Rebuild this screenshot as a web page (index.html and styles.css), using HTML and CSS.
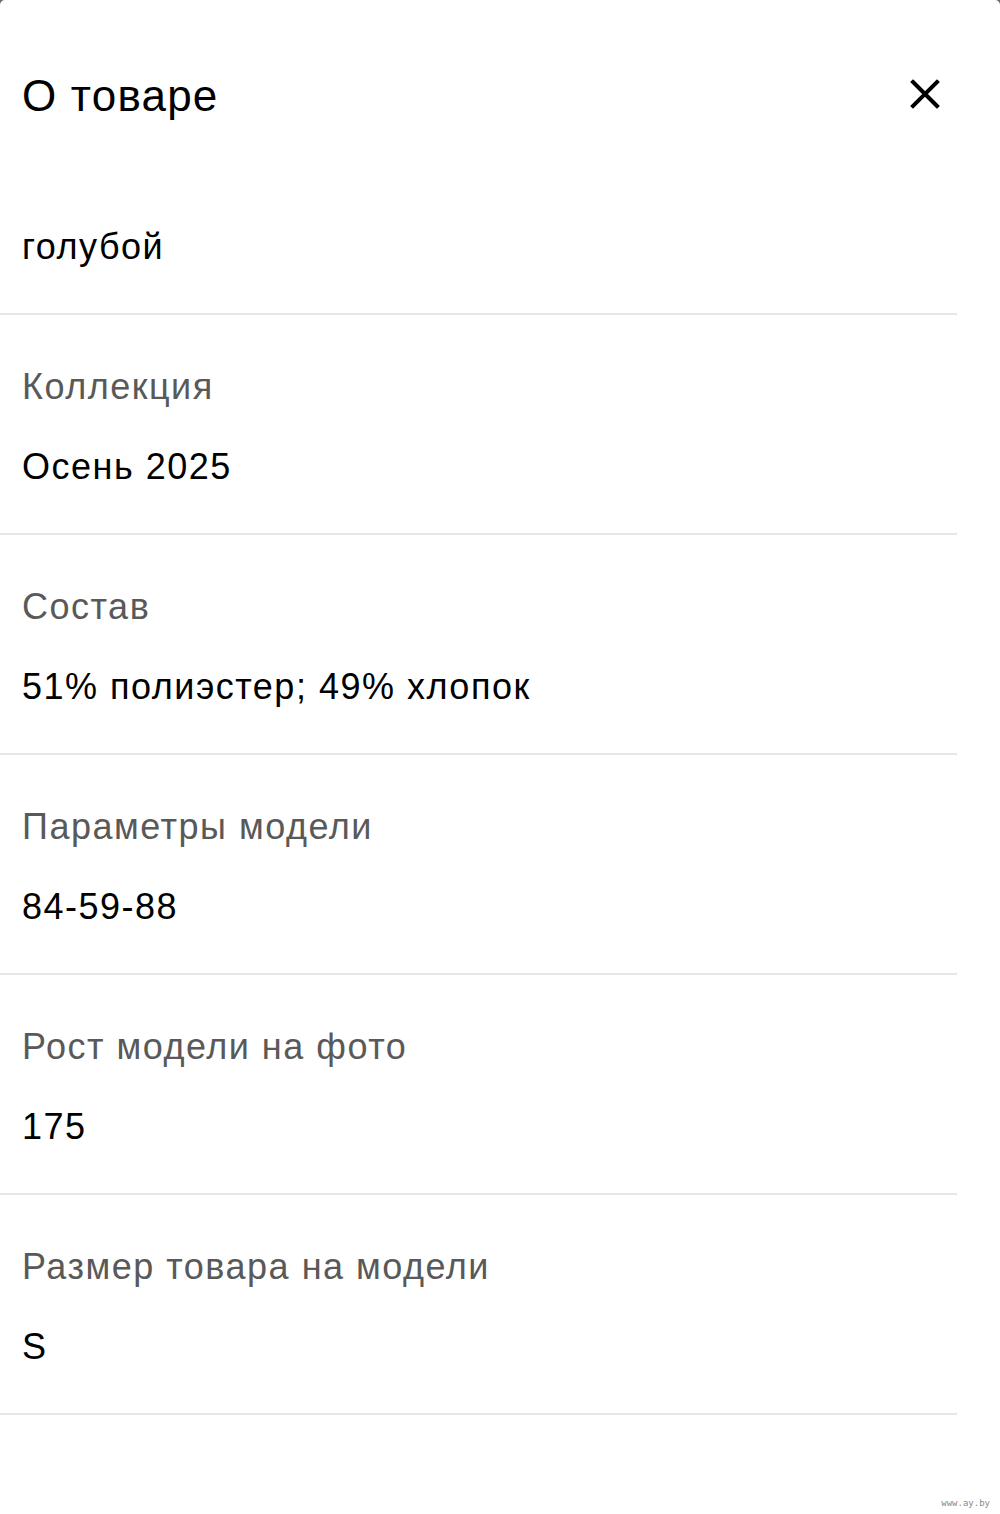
FILE: index.html
```html
<!DOCTYPE html>
<html lang="ru">
<head>
<meta charset="utf-8">
<title>О товаре</title>
<link rel="stylesheet" href="styles.css">
</head>
<body>
<div class="sheet">
  <header class="sheet-header">
    <h1 class="sheet-title">О товаре</h1>
    <button class="close-btn" aria-label="Закрыть">
      <svg width="30" height="30" viewBox="0 0 30 30" aria-hidden="true">
        <path d="M3 3 L27 27 M27 3 L3 27" stroke="#000" stroke-width="4" stroke-linecap="square" fill="none"/>
      </svg>
    </button>
  </header>
  <ul class="props">
    <li class="prop prop-first">
      <div class="prop-value">голубой</div>
    </li>
    <li class="prop">
      <div class="prop-label">Коллекция</div>
      <div class="prop-value">Осень 2025</div>
    </li>
    <li class="prop">
      <div class="prop-label">Состав</div>
      <div class="prop-value">51% полиэстер; 49% хлопок</div>
    </li>
    <li class="prop">
      <div class="prop-label">Параметры модели</div>
      <div class="prop-value">84-59-88</div>
    </li>
    <li class="prop">
      <div class="prop-label">Рост модели на фото</div>
      <div class="prop-value">175</div>
    </li>
    <li class="prop">
      <div class="prop-label">Размер товара на модели</div>
      <div class="prop-value">S</div>
    </li>
  </ul>
  <div class="watermark">www.ay.by</div>
</div>
</body>
</html>
```
FILE: styles.css
```css
html, body {
  margin: 0;
  padding: 0;
  background: #6a6a6a;
}

body {
  font-family: "Liberation Sans", Arial, sans-serif;
  color: #000;
}

.sheet {
  position: relative;
  width: 1000px;
  height: 1514px;
  background: #fff;
  border-radius: 5px 5px 0 0;
  overflow: hidden;
}

.sheet-header {
  display: flex;
  align-items: center;
  justify-content: space-between;
  padding: 70px 60px 0 22px;
}

.sheet-title {
  margin: 0;
  font-size: 44px;
  line-height: 52px;
  font-weight: 400;
  letter-spacing: 1.2px;
}

.close-btn {
  display: flex;
  padding: 0;
  margin-top: -4px;
  border: 0;
  background: none;
}

.props {
  list-style: none;
  margin: 0;
  padding: 0;
  width: 957px;
}

.prop {
  display: flex;
  flex-direction: column;
  gap: 36px;
  padding: 50px 22px 44px;
  border-bottom: 2px solid #e6e6e6;
}

.prop-first {
  padding-top: 103px;
}

.prop-label,
.prop-value {
  font-size: 36px;
  line-height: 44px;
  letter-spacing: 1.5px;
}

.prop-label {
  color: #595959;
}

.prop-value {
  color: #000;
}

.watermark {
  position: absolute;
  right: 10px;
  bottom: 6px;
  font-family: "DejaVu Sans Mono", monospace;
  font-size: 9px;
  color: #8a8a8a;
}
```
